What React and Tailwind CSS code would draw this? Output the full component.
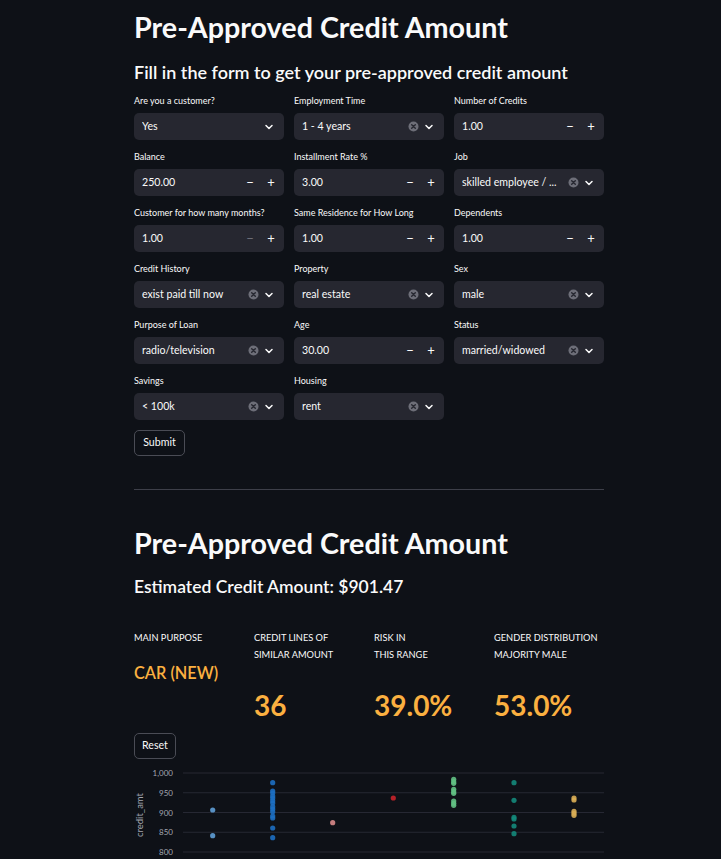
import React from "react"

const fields = [
  { label: "Are you a customer?", type: "select", value: "Yes", clear: false },
  { label: "Employment Time", type: "select", value: "1 - 4 years" },
  { label: "Number of Credits", type: "number", value: "1.00" },
  { label: "Balance", type: "number", value: "250.00" },
  { label: "Installment Rate %", type: "number", value: "3.00" },
  { label: "Job", type: "select", value: "skilled employee / ..." },
  { label: "Customer for how many months?", type: "number", value: "1.00", atMin: true },
  { label: "Same Residence for How Long", type: "number", value: "1.00" },
  { label: "Dependents", type: "number", value: "1.00" },
  { label: "Credit History", type: "select", value: "exist paid till now" },
  { label: "Property", type: "select", value: "real estate" },
  { label: "Sex", type: "select", value: "male" },
  { label: "Purpose of Loan", type: "select", value: "radio/television" },
  { label: "Age", type: "number", value: "30.00" },
  { label: "Status", type: "select", value: "married/widowed" },
  { label: "Savings", type: "select", value: "< 100k" },
  { label: "Housing", type: "select", value: "rent" },
]

function Chevron() {
  return (
    <svg width="10" height="10" viewBox="0 0 10 10" fill="none">
      <path d="M2 3.5 L5 6.5 L8 3.5" stroke="#fafafa" strokeWidth="1.5" strokeLinecap="round" strokeLinejoin="round" />
    </svg>
  )
}

function ClearIcon() {
  return (
    <svg width="11" height="11" viewBox="0 0 11 11">
      <circle cx="5.5" cy="5.5" r="5" fill="#6d6e78" />
      <path d="M3.7 3.7 L7.3 7.3 M7.3 3.7 L3.7 7.3" stroke="#262730" strokeWidth="1.4" strokeLinecap="round" />
    </svg>
  )
}

function SelectBox({ value, clear = true }) {
  return (
    <div className="flex h-[27px] items-center rounded-[5px] bg-[#262730] pl-2 pr-[10px]">
      <span className="flex-1 truncate text-[10.6px]">{value}</span>
      {clear && (
        <span className="ml-2 flex w-[11px] justify-center">
          <ClearIcon />
        </span>
      )}
      <span className="ml-[5px] flex w-[10px] justify-center">
        <Chevron />
      </span>
    </div>
  )
}

function NumberBox({ value, atMin }) {
  return (
    <div className="flex h-[27px] items-center rounded-[5px] bg-[#262730] pl-2">
      <span className="flex-1 text-[10.6px]">{value}</span>
      <span className={"flex w-[20px] justify-center text-[13px] leading-none " + (atMin ? "text-[#6d6e78]" : "text-[#fafafa]")}>−</span>
      <span className="mr-[2px] flex w-[22px] justify-center text-[13px] leading-none">+</span>
    </div>
  )
}

function Field({ field }) {
  return (
    <div>
      <div className="mb-[5px] h-[14px] text-[9px] leading-[14px]">{field.label}</div>
      {field.type === "select" ? (
        <SelectBox value={field.value} clear={field.clear !== false} />
      ) : (
        <NumberBox value={field.value} atMin={field.atMin} />
      )}
    </div>
  )
}

const ticks = [1000, 950, 900, 850, 800]
const yOf = (v) => 8 + (1000 - v) * 0.395

const points = [
  { x: 78.7, c: "#5f9fd6", ys: [45, 70.7] },
  { x: 138.7, c: "#1d6fc2", ys: [17.7, 26, 28, 31, 33, 35.7, 38, 41.7, 44, 46.7, 51, 53, 63, 72.7] },
  { x: 198.7, c: "#d98a8a", ys: [57.7] },
  { x: 259.3, c: "#c8242a", ys: [33] },
  { x: 319.7, c: "#62c083", ys: [14.3, 16.7, 18.3, 24.3, 26.7, 28.3, 36, 38.3, 40.3] },
  { x: 380, c: "#14897b", ys: [17.7, 35.3, 52.3, 54, 61, 68.7] },
  { x: 440, c: "#d9ae55", ys: [33, 35, 46.3, 48.3, 50.3] },
]

function Chart() {
  return (
    <svg width="470" height="96" className="mt-[6px] block">
      {ticks.map((t) => (
        <g key={t}>
          <line x1="49" x2="470" y1={yOf(t)} y2={yOf(t)} stroke="#262833" strokeWidth="1" />
          <text x="39" y={yOf(t) + 3} textAnchor="end" fontSize="8" fill="#a3a6b1" fontFamily="Lato, sans-serif">
            {t.toLocaleString("en-US")}
          </text>
        </g>
      ))}
      <text x="9" y="50" transform="rotate(-90 9 50)" textAnchor="middle" fontSize="9.5" fill="#a3a6b1" fontFamily="Lato, sans-serif">
        credit_amt
      </text>
      {points.map((p) =>
        p.ys.map((y, i) => <circle key={p.x + "-" + i} cx={p.x} cy={y} r="2.6" fill={p.c} fillOpacity="0.9" />)
      )}
    </svg>
  )
}

function Metric({ label, value, small }) {
  return (
    <div>
      <div className="text-[9.25px] uppercase leading-[17px]">{label}</div>
      {small ? (
        <div className="mt-[16px] text-[16.3px] font-semibold leading-[22px] text-[#fbb040]">{value}</div>
      ) : (
        <div className="mt-[26px] text-[28px] font-bold leading-[32px] text-[#fbb040]">{value}</div>
      )}
    </div>
  )
}

export default function App() {
  return (
    <div className="min-h-screen bg-[#0e1117] font-['Lato',sans-serif] text-[#fafafa]">
      <div className="ml-[134px] w-[470px] pt-[9px]">
        <h1 className="h-[36px] text-[28.7px] font-bold leading-[36px]">Pre-Approved Credit Amount</h1>
        <h3 className="mt-[13px] h-[28px] whitespace-nowrap text-[18px] font-semibold leading-[28px]">
          Fill in the form to get your pre-approved credit amount
        </h3>

        <div className="mt-[8px] grid grid-cols-3 gap-x-[10px] gap-y-[10px]">
          {fields.map((f) => (
            <Field key={f.label} field={f} />
          ))}
        </div>

        <button className="mt-[10px] h-[26px] w-[51px] rounded-[5px] border border-[#4a4c55] text-[10.6px]">
          Submit
        </button>

        <div className="mt-[33px] h-px bg-[#3d3f49]" />

        <h1 className="mt-[35px] h-[36px] text-[28.7px] font-bold leading-[36px]">Pre-Approved Credit Amount</h1>
        <h4 className="mt-[14px] h-[24px] text-[17.5px] font-semibold leading-[24px]">
          Estimated Credit Amount: $901.47
        </h4>

        <div className="mt-[30px] grid grid-cols-4 gap-x-[10px]">
          <Metric label="Main Purpose" value="CAR (NEW)" small />
          <Metric label={<>Credit lines of<br />similar amount</>} value="36" />
          <Metric label={<>Risk in<br />this range</>} value="39.0%" />
          <Metric label={<>Gender distribution<br />majority male</>} value="53.0%" />
        </div>

        <button className="mt-[12px] h-[26px] w-[42px] rounded-[5px] border border-[#4a4c55] text-[10.6px]">
          Reset
        </button>

        <Chart />
      </div>
    </div>
  )
}
